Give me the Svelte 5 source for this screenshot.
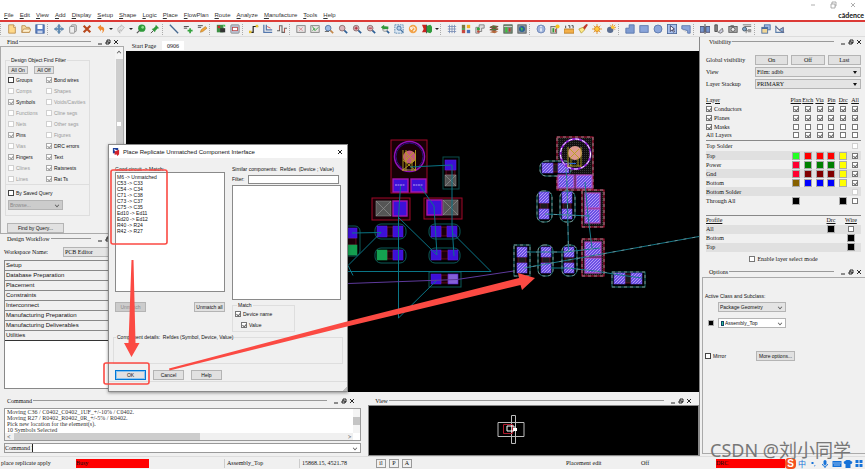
<script>
  const menus = ['File', 'Edit', 'View', 'Add', 'Display', 'Setup', 'Shape', 'Logic', 'Place', 'FlowPlan', 'Route', 'Analyze', 'Manufacture', 'Tools', 'Help'];

  const lens = '<path d="M7 7l4 4" stroke="#2c5f96" stroke-width="2"/><circle cx="5" cy="5" r="3.4" fill="#d9b7bd" stroke="#866" />';
  const board = '<rect x="1" y="2" width="10" height="8" fill="#e9e4e4" stroke="#777"/>';
  const toolbar = [
    [
      ['New', '<path d="M2 1h6l2 3v7H2z" fill="#ffd98a" stroke="#b98a4a"/><path d="M8 1v3h2" fill="#fff" stroke="#b98a4a"/>'],
      ['Open', '<path d="M1 10V2h4l1 2h4v6z" fill="#f5d9a0" stroke="#b98a4a"/><path d="M1 10l2-4h9l-2 4z" fill="#fff0cf" stroke="#b98a4a"/>'],
      ['Save', '<rect x="1" y="1" width="10" height="10" fill="#5c80c4" stroke="#3b5c98"/><rect x="3" y="1" width="6" height="5" fill="#fff"/><rect x="3" y="8" width="6" height="3" fill="#c8d4ea"/>']
    ],
    [
      ['Move', '<path d="M6 0l2 3H7v2h2V4l3 2-3 2V7H7v2h1l-2 3-2-3h1V7H3v1L0 6l3-2v1h2V3H4z" fill="#5d8cb8" stroke="#41698f" stroke-width=".4"/>'],
      ['Copy', '<rect x="4" y="1" width="6" height="8" rx="1" fill="#ddd" stroke="#888"/><rect x="2" y="3" width="6" height="8" rx="1" fill="#eee" stroke="#888"/>'],
      ['Delete', '<path d="M2 2l8 8M10 2l-8 8" stroke="#b8481c" stroke-width="2.6"/>'],
      ['Undo', '<path d="M2 4l4-3v2c5 0 5 6 1 8 2-3 1-4-1-4v2z" fill="#ef8a32"/>'],
      ['caret', ''],
      ['Redo', '<path d="M10 4L6 1v2C1 3 1 9 5 11 3 8 4 7 6 7v2z" fill="#e4e4e4" stroke="#999" stroke-width=".6"/>'],
      ['caret', ''],
      ['Fix', '<circle cx="7" cy="5" r="4.4" fill="#2f9a3a"/><circle cx="8" cy="4" r="1.6" fill="#8ae08a"/><path d="M1 11l3-3" stroke="#555" stroke-width="1.4"/>'],
      ['Unfix', '<path d="M7 1l4 4-2 .5L6.500 8 6 10 2 6l2-.5L6.500 3z" fill="#2f9a3a"/><path d="M1 11l3-3" stroke="#333"/>']
    ],
    [
      ['Add line', '<path d="M1 1l10 10" stroke="#46688f" stroke-width="1.6"/>'],
      ['Add text', '<path d="M1 3h6M1 5h4" stroke="#555" stroke-width="1.2"/><path d="M8.500 5v6M5.500 8h6" stroke="#33a23c" stroke-width="2"/>'],
      ['Edit text', '<path d="M1 2h6M1 4h4" stroke="#555" stroke-width="1.2"/><path d="M4 10l1-3 5-4 2 2-5 4z" fill="#f1a63a" stroke="#a86a1b" stroke-width=".6"/>']
    ],
    [
      ['Place manually', '<rect x="1" y="1" width="8" height="9" fill="#3c8f43"/><rect x="5" y="5" width="6" height="5" fill="#333"/><path d="M2 2h3v3H2z" fill="#c7302b"/><path d="M8 1h3v3z" fill="#3ac04a"/>'],
      ['Place component', '<rect x="1" y="1" width="10" height="10" rx="1" fill="#bcc7da" stroke="#888"/><rect x="3" y="4" width="6" height="4" fill="#fff" stroke="#b44"/>']
    ],
    [
      ['Add connect', '<path d="M1 10h4V3h6" fill="none" stroke="#222" stroke-width="1.4"/><rect x="0" y="8" width="3" height="3" fill="#e8c12f"/><rect x="8" y="1" width="3" height="3" fill="#e8c12f"/>'],
      ['Slide', '<path d="M1 1v9h10M4 1v6h7" fill="none" stroke="#5578ad" stroke-width="1.5"/><path d="M5 3l4 2" stroke="#c44"/>'],
      ['Delay tune', '<path d="M0 8h3V2h3v8h3V5h3" fill="none" stroke="#666" stroke-width="1.3"/><path d="M3 2v5M9 10V5" stroke="#c45a4a"/>']
    ],
    [
      ['Unrats all', board + '<path d="M3 4l5 4M8 4L4 8" stroke="#d58a90"/>'],
      ['Rats all', board + '<path d="M3 3l3 5 4-4M3 8l3-3" stroke="#2f9a3a" fill="none"/>'],
      ['Zoom points', '<path d="M7 7l4 4" stroke="#c4884a" stroke-width="2"/><circle cx="5" cy="5" r="3.4" fill="#9dbbe2" stroke="#4c6f9c"/><path d="M1 9h5" stroke="#555"/>'],
      ['Zoom fit', lens],
      ['Zoom in', lens + '<path d="M5 3v4M3 5h4" stroke="#a12" />'],
      ['Zoom out', lens + '<path d="M3 5h4" stroke="#a12"/>'],
      ['Zoom previous', '<path d="M7 7l4 4" stroke="#2c5f96" stroke-width="2"/><circle cx="6" cy="6" r="3" fill="#ddd" stroke="#999"/><path d="M1 4l4-3v2h5v3H5v1z" fill="#2f9a3a"/>'],
      ['Zoom selection', '<rect x="1" y="1" width="10" height="10" fill="#dce8f4" stroke="#4b7ca8" stroke-dasharray="2 1"/><circle cx="6" cy="5" r="2.500" fill="#b7d0ea" stroke="#3c6c9c"/><path d="M8 7l3 3" stroke="#3c6c9c" stroke-width="1.500"/>'],
      ['Refresh', '<circle cx="6" cy="6" r="5" fill="#f2a34a"/><path d="M3.500 6a2.500 2.500 0 1 1 2.500 2.500M3 4l1 3 2-2" stroke="#fff" fill="none" stroke-width="1.200"/>'],
      ['Flip design', '<path d="M0 1h5v9H0l2-4z" fill="#c9241d"/><path d="M6 2l4-1 2 2v6l-2 2-4-1z" fill="#2f9a3a"/><path d="M5 1h1v10H5z" fill="#333"/>'],
      ['caret', '']
    ],
    [
      ['Grid toggle', '<path d="M1 3h10M1 6h10M1 9h10M3 1v10M6 1v10M9 1v10" stroke="#7b8fb6"/>'],
      ['Color', '<rect x="1" y="1" width="4" height="4" fill="#7a7a40"/><rect x="7" y="1" width="4" height="4" fill="#f0b21e"/><rect x="1" y="7" width="4" height="4" fill="#c8483c"/><rect x="7" y="7" width="4" height="4" fill="#4971b4"/><path d="M1 6h4" stroke="#3a9440" stroke-width="2"/>'],
      ['Layers', '<path d="M1 11V4h4V1h6v4H8v4H5v2z" fill="#ddd" stroke="#777"/><circle cx="4" cy="6" r="2" fill="#38a043"/><circle cx="4" cy="9" r="1.500" fill="#c8483c"/>'],
      ['Cross section', '<path d="M1 4l4-2 6 1-4 2zM1 7l4-2 6 1-4 2z" fill="#3c8f43" stroke="#7c3e2c"/><path d="M1 10l4-2 6 1-4 2z" fill="#b5673a"/>'],
      ['Constraints', '<rect x="1" y="1" width="10" height="10" fill="#7a8c7a" stroke="#4c5e4c"/><path d="M1 3h10" stroke="#ddd"/><rect x="3" y="4" width="2" height="6" fill="#3c3"/><rect x="7" y="5" width="2" height="4" fill="#c33"/>'],
      ['World view', '<rect x="1" y="1" width="10" height="10" fill="#8e9aa2" stroke="#555"/><circle cx="6" cy="6" r="3.600" fill="#2c5f96"/><path d="M4 4l3 1-1 4z" fill="#4c4"/>']
    ],
    [
      ['Show element', '<circle cx="6" cy="6" r="4.800" fill="#9eb3dc" stroke="#6a82b2"/><path d="M6 5v4M6 2.500v1.500" stroke="#fff" stroke-width="1.600"/>'],
      ['Properties', '<rect x="1" y="3" width="7" height="8" fill="#d8d8c8" stroke="#666"/><rect x="3" y="5" width="2" height="5" fill="#2f9a3a"/><rect x="6" y="6" width="1" height="4" fill="#c33"/><circle cx="9" cy="3" r="2.500" fill="#f3c221"/>'],
      ['Measure', '<rect x="0" y="6" width="12" height="5" fill="#f3b04a" stroke="#b77a23"/><path d="M2 2v3M5 2h2v3M9 2h2v3" stroke="#333" fill="none"/>'],
      ['Highlight', '<path d="M1 6l5-2 2 3-4 4z" fill="#ffe98a" stroke="#b8a23a"/><path d="M6 4l4-4 2 1-4 6z" fill="#c0392b"/>'],
      ['Sun', '<path d="M6 0v12M0 6h12M2 2l8 8M10 2l-8 8" stroke="#e28a1e"/><circle cx="6" cy="6" r="3" fill="#ffc93c" stroke="#d9841c"/>'],
      ['Shadow', '<path d="M8 0v8M4 4h8M5 1l6 6M11 1L5 7" stroke="#e28a1e"/><circle cx="5" cy="7" r="3.800" fill="#5c6f92"/><circle cx="8" cy="4" r="2" fill="#ffc93c"/>']
    ],
    [
      ['Shape add', '<path d="M1 11V5h4V1h6v10z" fill="#7f9cd2" stroke="#5672a8"/>'],
      ['Shape rectangle', '<rect x="1" y="2" width="10" height="8" fill="#8aa5da" stroke="#5672a8"/>'],
      ['Shape circle', '<circle cx="6" cy="6" r="4.800" fill="#8aa5da" stroke="#5672a8"/>'],
      ['Shape select', '<rect x=".5" y=".5" width="11" height="11" fill="#a9c2ee" stroke="#4a6698"/><path d="M4 2v7l2-2 2 3 1-1-2-3h2z" fill="#fff" stroke="#335"/>'],
      ['Shape void', '<path d="M1 2h10v9H8V8L1 6z" fill="#8aa5da" stroke="#5672a8"/><path d="M2 7l5 3" stroke="#ccc"/>']
    ],
    [
      ['Mirror', '<path d="M0 3h5v7H0zM7 3h5v7H7z" fill="#7695cc" stroke="#446"/><path d="M6 0v12" stroke="#333"/>'],
      ['Rotate', '<path d="M1 1h3v8H1z" fill="#888" stroke="#444"/><path d="M5 10l5-5 1 4-3 2z" fill="#ccd" stroke="#666"/>'],
      ['Snapshot', '<rect x="1" y="3" width="10" height="7" fill="#aaa" stroke="#555"/><circle cx="6" cy="6.500" r="2.400" fill="#eee" stroke="#555"/><path d="M3 2h4" stroke="#555"/>'],
      ['Database', '<path d="M1 1h10M3 3h8M5 5v6M5 8h6" stroke="#666" fill="none"/><circle cx="3" cy="6" r="2.400" fill="#7aa4c4" stroke="#456"/><path d="M7 6h4v4H7z" fill="#999"/>']
    ],
    [
      ['Windows', '<rect x="4" y="1" width="7" height="6" fill="#9fbce8" stroke="#466a9e"/><rect x="1" y="4" width="7" height="7" fill="#f2d797" stroke="#466a9e"/><path d="M1 5h7" stroke="#466a9e" stroke-width="2"/>'],
      ['Graph', '<path d="M1 2v8h10" stroke="#5d7faa" fill="none" stroke-width="1.400"/><path d="M1 3l4 4 5-3v6L6 8z" fill="#86b0d8" stroke="#557"/>']
    ]
  ];

  const filters = [
    ['Groups', 0, 1, 'Bond wires', 1, 0], ['Comps', 0, 0, 'Shapes', 0, 0], ['Symbols', 1, 0, 'Voids/Cavities', 0, 0],
    ['Functions', 0, 0, 'Cline segs', 0, 0], ['Nets', 0, 0, 'Other segs', 0, 0], ['Pins', 1, 0, 'Figures', 0, 0],
    ['Vias', 0, 0, 'DRC errors', 1, 0], ['Fingers', 1, 0, 'Text', 1, 0], ['Clines', 0, 0, 'Ratsnests', 1, 0], ['Lines', 0, 0, 'Rat Ts', 1, 0]
  ].flatMap(([a, ac, ae, b, bc]) => [
    { name: a, on: !!ac, dim: !ac && !ae, strong: !!ae },
    { name: b, on: !!bc, dim: !bc, strong: false }
  ]);

  const steps = ['Setup', 'Database Preparation', 'Placement', 'Constraints', 'Interconnect', 'Manufacturing Preparation', 'Manufacturing Deliverables', 'Utilities'];
  const pairs = ['M6 -> Unmatched', 'C53 -> C33', 'C54 -> C34', 'C71 -> C38', 'C73 -> C37', 'C75 -> C35', 'Ed10 -> Ed11', 'Ed20 -> Ed12', 'R40 -> R24', 'R42 -> R27'];

  const cols = ['Plan', 'Etch', 'Via', 'Pin', 'Drc', 'All'];
  const groups = [
    ['Conductors', true, [1, 1, 1, 1, 1, 1]],
    ['Planes', true, [1, 1, 1, 1, 1, 1]],
    ['Masks', true, [0, 0, 0, 0, 0, 0]],
    ['All Layers', false, [0, 1, 1, 1, 0, 0]]
  ];
  const layers = [
    ['Top Solder', [], 'dim'],
    ['Top', ['#2f2', '#f00', '#f00', '#f00', '#ff0'], 'on'],
    ['Power', ['#ff0030', '#008000', '#008000', '#008000', '#ff0'], 'on'],
    ['Gnd', ['#ff0030', '#800000', '#800000', '#800000', '#ff0'], 'on'],
    ['Bottom', ['#866000', '#00f', '#00f', '#00f', '#ff0'], 'on'],
    ['Bottom Solder', [], 'dim'],
    ['Through All', ['#000', '', '', '', '#000'], 'off']
  ];

  // x, y, w, h, corner radius, outline colour
  const outlines = [
    [391, 140, 36, 53, 0, '#a00828'], [443, 157, 16, 32, 0, '#0b4c4c'], [372, 198, 38, 22, 0, '#a00828'],
    [424, 198, 38, 21, 0, '#a00828'], [375, 224, 31, 15, 6, '#0b5a58'], [429, 224, 31, 15, 6, '#0b5a58'],
    [375, 248, 31, 15, 6, '#0b5a58'], [429, 248, 31, 15, 6, '#0b5a58'], [429, 272, 32, 15, 0, '#0b5a58'],
    [340, 226, 20, 30, 5, '#0b5a58']
  ];
  const pads = [
    [393, 179, 15, 13, 'm'], [411, 179, 15, 13, 'm'], [445, 160, 11, 10, 'p'], [445, 175, 11, 11, 'x'],
    [376, 201, 15, 15, 'x'], [393, 201, 14, 15, 'm'], [427, 200, 15, 15, 'm'], [443, 200, 15, 15, 'x'],
    [377, 226, 10, 11, 'p'], [393, 226, 10, 11, 'p'], [431, 226, 10, 11, 'p'], [447, 226, 10, 11, 'p'],
    [377, 250, 10, 10, 'g'], [393, 250, 10, 10, 'p'], [431, 250, 10, 10, 'p'], [448, 250, 10, 10, 'p'],
    [431, 274, 10, 10, 'p'], [448, 274, 10, 10, 'l'], [345, 228, 12, 10, 'p'], [345, 245, 12, 10, 'g']
  ];
  const bridges = [[446, 170, 9, 5], [387, 227, 6, 9], [441, 227, 6, 9], [387, 251, 6, 8], [441, 251, 7, 8], [441, 275, 7, 8], [346, 238, 10, 7]];
  const newOutlines = [
    [557, 137, 36, 53, 0, '#c0143c'], [540, 161, 31, 15, 6, '#16716c'], [537, 191, 15, 31, 6, '#16716c'],
    [560, 191, 15, 31, 6, '#16716c'], [582, 190, 22, 37, 0, '#c0143c'], [514, 245, 16, 31, 0, '#16716c'],
    [538, 245, 15, 31, 6, '#16716c'], [562, 245, 15, 31, 6, '#16716c'], [582, 239, 22, 37, 0, '#c0143c'],
    [612, 272, 33, 15, 0, '#16716c']
  ];
  const newPads = [
    [558, 175, 16, 13, 1], [576, 175, 16, 13, 1], [542, 163, 11, 10, 0], [558, 163, 11, 10, 0],
    [539, 192, 10, 11, 0], [539, 209, 10, 10, 0], [562, 192, 10, 11, 0], [562, 209, 10, 10, 0],
    [585, 193, 15, 15, 1], [585, 209, 15, 14, 1], [517, 247, 10, 10, 0], [517, 263, 10, 10, 0],
    [541, 247, 10, 10, 0], [541, 263, 10, 10, 0], [564, 247, 10, 10, 0], [564, 263, 10, 10, 0],
    [585, 242, 16, 14, 1], [585, 258, 16, 15, 1], [614, 273, 11, 11, 0], [631, 273, 11, 11, 0]
  ];
  const newBridges = [[553, 164, 5, 8], [540, 203, 8, 6], [563, 203, 8, 6], [518, 257, 8, 6], [542, 257, 8, 6], [565, 257, 8, 6], [625, 274, 6, 9]];
</script>

{#snippet dockHead(title)}
  <header class="dock-head">
    <span>{title}</span><i></i>
    <button aria-label="Minimize {title}"><svg viewBox="0 0 6 6"><path d="M1 5h4" /></svg></button>
    <button aria-label="Float {title}"><svg viewBox="0 0 6 6"><path d="M2 3V1h3v3H4M1 3h3v2H1z" /></svg></button>
    <button aria-label="Close {title}"><svg viewBox="0 0 6 6"><path d="M1 1l4 4M5 1L1 5" /></svg></button>
  </header>
{/snippet}

<div class="app">
  <div class="top">
    <div class="win-controls">
      <button aria-label="Minimize"><svg viewBox="0 0 8 8"><path d="M2 4h4" /></svg></button>
      <button aria-label="Restore"><svg viewBox="0 0 8 8"><path d="M2 3h4v4H2zM3 3V1h4v4H6" /></svg></button>
      <button aria-label="Close"><svg viewBox="0 0 8 8"><path d="M2 2l4 4M6 2L2 6" /></svg></button>
    </div>
    <nav class="menu">
      {#each menus as m}<button><u>{m[0]}</u>{m.slice(1)}</button>{/each}
      <b>cādence</b>
    </nav>
  </div>

  <div class="toolbar">
    {#each toolbar as group}
      <span class="sep"></span>
      {#each group as [name, art]}
        {#if name === 'caret'}
          <button class="caret" aria-label="More"></button>
        {:else}
          <button class="tool" aria-label={name}><svg viewBox="0 0 12 12">{@html art}</svg></button>
        {/if}
      {/each}
    {/each}
  </div>

  <div class="main">
    <div class="work">
      <div class="upper">
        <aside class="left">
          {@render dockHead('Find')}
          <div class="find">
            <div class="find-body">
              <fieldset>
                <legend>Design Object Find Filter</legend>
                <div class="all"><button class="btn">All On</button><button class="btn">All Off</button></div>
                <div class="filters">
                  {#each filters as f}
                    <label class:dim={f.dim} class:strong={f.strong}><input type="checkbox" checked={f.on} />{f.name}</label>
                  {/each}
                </div>
              </fieldset>
              <div class="query">
                <label class="strong"><input type="checkbox" />By Saved Query</label>
                <span class="sel off"><select aria-label="Saved query" disabled><option>Browse...</option></select></span>
              </div>
              <button class="btn find-btn">Find by Query...</button>
            </div>
            <div class="vbar"><i></i></div>
          </div>
          {@render dockHead('Design Workflow')}
          <div class="space">
            <label for="ws">Workspace Name:</label>
            <span class="sel"><select id="ws"><option>PCB Editor</option></select></span>
          </div>
          <ul class="steps">
            {#each steps as s}<li>{s}</li>{/each}
          </ul>
        </aside>

        <section class="center">
          <div class="tabs"><button>Start Page</button><button class="active">0906</button></div>
          <div class="canvas">
            <svg width="100%" height="100%">
              <defs>
                <pattern id="hatch" width="3" height="3" patternUnits="userSpaceOnUse">
                  <rect width="3" height="3" fill="#6a50e4" /><path d="M0 0h1v1H0zM2 1h1v1H2zM1 2h1v1H1z" fill="#b498f6" />
                </pattern>
                <pattern id="mesh" width="2" height="2" patternUnits="userSpaceOnUse">
                  <rect width="2" height="2" fill="#101010" /><path d="M0 0h1v1H0z" fill="#343434" />
                </pattern>
              </defs>
              <g transform="translate(-126 -51)" fill="none">
                {#each outlines as [x, y, w, h, r, c]}<rect {x} {y} width={w} height={h} rx={r} stroke={c} fill={c === '#a00828' ? '#180006' : '#000'} />{/each}
                {#each bridges as [x, y, w, h]}<rect {x} {y} width={w} height={h} fill="#1c0008" stroke="#80102c" stroke-width=".7" />{/each}
                {#each pads as [x, y, w, h, k]}
                  <rect {x} {y} width={w} height={h} class="pad {k}" />
                  {#if k === 'x'}<path d="M{x} {y}l{w} {h}M{x + w} {y}l{-w} {h}" stroke="#999" stroke-width=".6" />{/if}
                {/each}
                <circle cx="409.500" cy="156.500" r="15" stroke="#9010b8" stroke-width="1.500" />
                <circle cx="409.500" cy="156.500" r="13.500" stroke="#3010a0" stroke-width=".8" />
                <circle cx="409.500" cy="157" r="6.500" fill="#c45c78" />
                <path d="M403 150v21M406 150v21M412 160v11M415.500 150v21M402 170h14M405 152l9 9M414 152l-9 9M403 160l12 10M415 160l-12 10" stroke="#b5a21a" stroke-width=".9" />
                <path d="M395 185h10M413 185h10" stroke="#b9a0f0" stroke-dasharray="2 .5" />
                <g stroke="#0a7586">
                  <path d="M410 167l42-2V225l2 31M400.500 186l-2 31V318M420 186l14 20 3 49M398 217l39 38M352 233l29-.5-33 33 5 10M348 271.500h143l-38-38M437 280l-38.500 38" />
                </g>
                <path d="M348 283.500l109-4 60-9" stroke="#5e3a9c" />

                {#each newOutlines as [x, y, w, h, r, c]}
                  <rect {x} {y} width={w} height={h} rx={r} fill={c === '#c0143c' ? 'url(#mesh)' : '#000'} stroke={c} />
                  <rect {x} {y} width={w} height={h} rx={r} stroke="#a0a0a0" stroke-dasharray="3 3" stroke-width=".8" />
                {/each}
                {#each newBridges as [x, y, w, h]}<rect {x} {y} width={w} height={h} fill="#1c1c1c" stroke="#80102c" stroke-width=".7" />{/each}
                {#each newPads as [x, y, w, h, m]}<rect {x} {y} width={w} height={h} fill="url(#hatch)" stroke={m ? '#b448bc' : '#5a40d8'} stroke-width={m ? 1.2 : 0.6} />{/each}
                <circle cx="575.500" cy="154" r="15" stroke="#8a1cd0" stroke-width="2" />
                <circle cx="575.500" cy="154" r="15" stroke="#fff" stroke-dasharray="4 3" />
                <circle cx="575" cy="153" r="7" fill="#dc9a8e" />
                <path d="M568 147v20M571 158v8M578 158v8M581 147v20M568 166h13M570 149l9 9M579 149l-9 9" stroke="#b5a21a" stroke-width=".9" />
                <path d="M570 163.500h6" stroke="#2a6ad0" />
                <g stroke="#177a8a">
                  <path d="M566 169l1 15 1.500 68M585 182l3 34 4 32M545 214l45 2M527 252h38l35-4M551 268h17l27 3 25 4 22 3M524 268l175-31.500" />
                  <path d="M566 169l1 15 1.500 68M545 214l45 2M527 252h38l35-4M568 268l52 6M524 268l175-31.500" stroke="#a8a8a8" stroke-dasharray="3 6" stroke-width=".6" />
                </g>
              </g>
            </svg>
          </div>
        </section>
      </div>

      <div class="lower">
        <section class="command">
          {@render dockHead('Command')}
          <div class="log">
            <div class="log-text">
              <p>Moving C36 / C0402_C0402_1UF_+/-10% / C0402.</p>
              <p>Moving R27 / R0402_R0402_0R_+/-5% / R0402.</p>
              <p>Pick new location for the element(s).</p>
              <p>10 Symbols Selected</p>
            </div>
            <div class="log-v"><i></i></div>
            <div class="log-h"><span>&lt;</span><i></i><span>&gt;</span></div>
          </div>
          <div class="prompt"><label for="cmd">Command &gt;</label><input id="cmd" type="text" /><span class="down"></span></div>
        </section>
        <section class="view">
          {@render dockHead('View')}
          <div class="world">
            <svg width="100%" height="100%" fill="none">
              <path d="M129 16.500h26v14h-26zM142.500 9.500h4v28h-4z" stroke="#bbb" />
              <path d="M134.500 18.500h9v9h-9z" stroke="#b0182c" /><path d="M138 20h7v5h-7z" stroke="#fff" /><path d="M144 22h4v3h-4z" fill="#fff" />
            </svg>
          </div>
        </section>
      </div>
    </div>

    <aside class="right">
      {@render dockHead('Visibility')}
      <div class="vis">
        <div class="global"><span>Global visibility</span><button class="btn">On</button><button class="btn">Off</button><button class="btn">Last</button></div>
        <div class="pick"><label for="vw">View</label><span class="sel solid"><select id="vw"><option>Film: adbb</option></select></span></div>
        <div class="pick"><label for="ls">Layer Stackup</label><span class="sel solid"><select id="ls"><option>PRIMARY</option></select></span></div>

        <table class="layers">
          <thead><tr><th>Layer</th>{#each cols as c}<th>{c}</th>{/each}</tr></thead>
          <tbody>
            {#each groups as [name, box, vals]}
              <tr>
                <td>{#if box}<label><input type="checkbox" checked />{name}</label>{:else}{name}{/if}</td>
                {#each vals as v, i}<td><input type="checkbox" checked={!!v} aria-label="{name} {cols[i]}" /></td>{/each}
              </tr>
            {/each}
          </tbody>
          <tbody class="colors">
            {#each layers as [name, sw, all]}
              <tr>
                <td>{name}</td>
                {#each [0, 1, 2, 3, 4] as i}<td>{#if sw[i]}<button class="sw" style:background={sw[i]} aria-label="{name} {cols[i]} color"></button>{/if}</td>{/each}
                <td><input type="checkbox" class={all} checked={all === 'on'} aria-label="{name} all" /></td>
              </tr>
            {/each}
          </tbody>
        </table>

        <table class="profile">
          <thead><tr><th>Profile</th><th>Drc</th><th>Wire</th></tr></thead>
          <tbody>
            <tr><td>All</td><td><button class="sw black" aria-label="All Drc"></button></td><td><input type="checkbox" aria-label="All wire" /></td></tr>
            <tr><td>Bottom</td><td></td><td><button class="sw black" aria-label="Bottom wire"></button></td></tr>
            <tr><td>Top</td><td></td><td><button class="sw black" aria-label="Top wire"></button></td></tr>
          </tbody>
        </table>
        <label class="enable"><input type="checkbox" />Enable layer select mode</label>
      </div>
      {@render dockHead('Options')}
      <div class="options">
        <label for="cls">Active Class and Subclass:</label>
        <div class="opt"><span class="sel"><select id="cls"><option>Package Geometry</option></select></span></div>
        <div class="opt sub"><button class="sw black" aria-label="Subclass color"></button><span class="sel white"><i></i><select aria-label="Subclass"><option>Assembly_Top</option></select></span></div>
        <div class="mirror"><label class="strong"><input type="checkbox" />Mirror</label><button class="btn">More options...</button></div>
      </div>
    </aside>
  </div>

  <footer class="status">
    <span class="s1">place replicate apply</span><span class="busy">Busy</span><span class="s2">Assembly_Top</span><span class="s3">15868.15, 4521.78</span>
    <button>il</button><button>P</button><button>A</button>
    <span class="s4">Placement edit</span><span class="s5">Off</span><span class="drc">DRC</span>
    <span class="tray">
      <b>S</b><em>中</em>
      <svg viewBox="0 0 54 9" fill="#1672d8"><path d="M2 3h2v2H2zM5 6h1l-1 2z" /><rect x="14" y="1" width="3" height="5" rx="1.500" /><path d="M13 5c0 3 5 3 5 0M15.500 7v2" stroke="#1672d8" fill="none" /><path d="M23 2h9v6h-9z" /><path d="M24 4h7M25 6h5" stroke="#fff" stroke-dasharray="1 1" /><path d="M34 3l3-2h3l3 2-1 2h-1v4h-5V5h-1zM46 1h3v3h-3zM50 1h3v3h-3zM46 5h3v3h-3zM50 5h3v3h-3z" /></svg>
    </span>
  </footer>

  <div class="dialog" role="dialog" aria-label="Place Replicate Unmatched Component Interface">
    <div class="dlg-title">
      <svg viewBox="0 0 9 9"><path d="M1 0h6v6H1z" fill="#1d3f98" /><path d="M2 1l5 2-3 2z" fill="#fff" /><path d="M3 4l5-2v5l-2 2-1-2-2 1z" fill="#d3232b" /></svg>
      <span>Place Replicate Unmatched Component Interface</span>
      <button aria-label="Close dialog"><svg viewBox="0 0 8 8"><path d="M2 2l4 4M6 2L2 6" stroke="#222" /></svg></button>
    </div>
    <div class="dlg-cols">
      <div class="dlg-a">
        <span>Good circuit -&gt; Match:</span>
        <ul class="box">{#each pairs as p}<li>{p}</li>{/each}</ul>
        <div class="pair"><button class="btn" disabled>Unmatch</button><button class="btn">Unmatch all</button></div>
      </div>
      <div class="dlg-b">
        <span>Similar components:&nbsp; Refdes&nbsp; (Device ; Value)</span>
        <div class="filter"><label for="flt">Filter:</label><input id="flt" type="text" /></div>
        <div class="box"></div>
        <fieldset>
          <legend>Match</legend>
          <label><input type="checkbox" checked />Device name</label>
          <label class="in"><input type="checkbox" checked />Value</label>
        </fieldset>
      </div>
    </div>
    <fieldset class="details"><legend>Component details:&nbsp; Refdes (Symbol, Device, Value)</legend></fieldset>
    <div class="actions"><button class="btn ok">OK</button><button class="btn">Cancel</button><button class="btn">Help</button></div>
    <div class="grip"></div>
  </div>

  <svg class="marks" fill="none">
    <rect x="111" y="170" width="56" height="74" rx="2" stroke="#fb4a43" stroke-width="1.600" />
    <rect x="104" y="363" width="45" height="21" rx="2" stroke="#fb4a43" stroke-width="1.600" />
    <path d="M131.500 260h2l2 83h4l-8 14-7.500-14h4.500z" fill="#fb4a43" />
    <path d="M169 368.500L345 322l174-44-1-5 17 5-13 12-1.500-5L345 327 169.500 370.500z" fill="#fb4a43" />
  </svg>
  <div class="watermark">CSDN @刘小同学</div>
</div>

<style>
  :global(body) { margin: 0; }
  .app {
    position: relative; height: 100vh; display: flex; flex-direction: column; overflow: hidden;
    background: #f0f0f0; color: #111; font: 5px/6px "Liberation Sans", "Noto Sans CJK SC", sans-serif;
  }
  .app * { box-sizing: border-box; }
  button, input, select { font: inherit; color: inherit; margin: 0; padding: 0; border: 0; background: none; border-radius: 0; }
  button { white-space: nowrap; }
  svg { display: block; }
  ul, p, fieldset { margin: 0; padding: 0; list-style: none; }
  fieldset { border: 1px solid #dedede; min-width: 0; }
  legend { padding: 0 1px; margin-left: 2px; }
  .btn { background: #e1e1e1; border: 1px solid #b4b4b4; height: 10px; text-align: center; }
  .btn:disabled { background: #ccc; color: #888; }
  label { display: flex; align-items: center; gap: 2px; white-space: nowrap; }
  .dim { color: #999; }

  input[type='checkbox'] { appearance: none; width: 6px; height: 6px; flex: none; background: #fff; border: 1px solid #777; position: relative; }
  input[type='checkbox']:checked::before {
    content: ''; position: absolute; left: 1px; top: 0; width: 2px; height: 3px;
    border: solid #666; border-width: 0 1px 1px 0; transform: rotate(40deg);
  }
  .filters input[type='checkbox'] { border-color: #aaa; }
  .filters input[type='checkbox']:checked::before { border-color: #999; }
  .dim input[type='checkbox'], input.dim { border-color: #d0d0d0 !important; }
  .strong input[type='checkbox'] { border-color: #444 !important; }

  .sel { position: relative; display: flex; align-items: center; height: 10px; border: 1px solid #b4b4b4; background: #e4e4e4; }
  .sel select { appearance: none; width: 100%; height: 8px; padding-left: 1px; opacity: 1; }
  .sel::after, .down::after {
    content: ''; position: absolute; right: 3px; top: 2px; width: 3px; height: 3px;
    border: solid #555; border-width: 0 1px 1px 0; transform: rotate(45deg) scale(.8);
  }
  .sel.solid::after { width: 0; height: 0; top: 3px; border: 2px solid transparent; border-top: 3px solid #111; border-bottom: 0; transform: none; }
  .sel.off { background: #ccc; color: #888; }
  .sel.white { background: #fff; }
  .sel i { width: 3px; height: 5px; margin-left: 2px; flex: none; background: #2bc79b; border: 1px solid #146; }

  .top { background: #fff; height: 22px; flex: none; border-bottom: 2px solid #dc3a36; }
  .win-controls { display: flex; justify-content: flex-end; gap: 12px; padding-right: 8px; height: 9px; }
  .win-controls svg { width: 8px; height: 8px; fill: none; stroke: #999; stroke-width: .8; }
  .menu { display: flex; align-items: center; gap: 6px; height: 12px; padding-left: 4px; font-size: 6px; }
  .menu button { color: #333; }
  .menu b { margin-left: auto; font: bold 7px/8px Lato, sans-serif; padding-right: 1px; }

  .toolbar { height: 15px; flex: none; display: flex; align-items: center; border-bottom: 1px solid #dcdcdc; }
  .sep { width: 5px; height: 11px; flex: none; border-left: 1px dotted #aaa; }
  .tool { width: 14px; height: 12px; flex: none; display: grid; place-items: center; }
  .tool svg { width: 10px; height: 10px; fill: none; }
  .caret { width: 6px; height: 6px; flex: none; display: grid; place-items: center; }
  .caret::after { content: ''; border: 2px solid transparent; border-top: 2px solid #222; border-bottom: 0; }

  .main { flex: 1; min-height: 0; display: flex; }
  .work { flex: 1; min-width: 0; display: flex; flex-direction: column; }
  .upper { flex: 1; min-height: 0; display: flex; }
  .left { width: 126px; flex: none; display: flex; flex-direction: column; padding-bottom: 3px; }
  .center { flex: 1; min-width: 0; display: flex; flex-direction: column; }

  .dock-head { display: flex; align-items: center; height: 9px; flex: none; padding: 0 6px 0 7px; font: 6px/8px "Liberation Serif", serif; }
  .dock-head i { flex: 1; height: 1px; background: #999; margin: 0 5px 0 1px; }
  .dock-head button { width: 8px; height: 8px; display: grid; place-items: center; }
  .dock-head svg { width: 6px; height: 6px; fill: none; stroke: #111; stroke-width: .9; }

  .find { display: flex; height: 188px; border: 1px solid #aaa; margin-right: 2px; }
  .find-body { flex: 1; padding: 10px 0 0 4px; }
  .find-body fieldset { width: 85px; height: 128px; padding: 3px 2px; }
  .all { display: flex; gap: 6px; }
  .all .btn { width: 20px; height: 8px; line-height: 5px; }
  .filters { display: grid; grid-template-columns: 38px 1fr; grid-auto-rows: 11px; }
  .query { width: 85px; height: 31px; border: 1px solid #dedede; border-top: 0; padding: 5px 2px 0; display: grid; gap: 4px; align-content: start; }
  .query .sel { width: 55px; }
  .find-btn { width: 57px; margin: 7px 0 0 2px; }
  .vbar { width: 8px; background: #f4f4f4; display: flex; flex-direction: column; align-items: center; }
  .vbar::before { content: ''; width: 3px; height: 3px; margin: 4px 0; border: solid #555; border-width: 1px 0 0 1px; transform: rotate(45deg) scale(.8); }
  .vbar i { width: 7px; height: 110px; background: #cdcdcd; display: grid; place-items: center; }
  .vbar i::after { content: ''; width: 4px; height: 4px; background: #fff; margin-top: 20px; }
  .space { display: flex; align-items: center; gap: 15px; padding: 4px 0 3px 4px; font: 6px/8px "Liberation Serif", serif; }
  .space .sel { flex: 1; }
  .steps { flex: 1; margin-left: 4px; border: 1px solid #888; background: #fff; font: 6px/9px "Liberation Sans", sans-serif; }
  .steps li { height: 10px; padding-left: 1px; background: #f0f0f0; border-bottom: 1px solid #888; }
  .steps li:last-child { border-color: #333; }

  .tabs { display: flex; align-items: end; height: 14px; flex: none; font: 6px/8px "Liberation Serif", serif; padding-bottom: 1px; }
  .tabs button { width: 36px; height: 9px; }
  .tabs .active { width: 22px; background: #fff; }
  .canvas { flex: 1; min-height: 0; background: #000; }
  .pad { fill: #3d10d8; stroke: #5818d8; stroke-width: .6; }
  .pad.m { stroke: #a814b0; stroke-width: 1.4; }
  .pad.x { fill: #555; stroke: #888; }
  .pad.g { fill: #14a050; stroke: #14a050; }
  .pad.l { fill: #8460d8; }

  .lower { height: 64px; flex: none; display: flex; padding-top: 4px; }
  .command { width: 52.4%; display: flex; flex-direction: column; padding-right: 4px; }
  .view { flex: 1; display: flex; flex-direction: column; margin-left: 2px; }
  .world { flex: 1; min-height: 0; background: #000; border: 1px solid #888; }
  .log { margin: 3px 1px 0 4px; height: 33px; border: 1px solid #999; background: #fff; display: grid; grid-template: 24px 7px / 1fr 7px; font: 6px/6px "Liberation Serif", serif; color: #333; }
  .log-text { overflow: hidden; display: flex; flex-direction: column; justify-content: end; padding-left: 2px; }
  .log-v { padding: 8px 0; background: #f4f4f4; }
  .log-v i { display: block; height: 8px; background: #c4c4c4; }
  .log-h { display: flex; align-items: center; gap: 4px; padding: 0 2px; background: #f0f0f0; justify-content: space-between; }
  .log-h i { width: 54%; height: 7px; background: #cdcdcd; margin-right: auto; }
  .prompt { position: relative; display: flex; align-items: center; margin: 2px 1px 0 4px; height: 10px; border: 1px solid #999; font: 6px/8px "Liberation Serif", serif; }
  .prompt label { width: 27px; }
  .prompt input { flex: 1; height: 8px; background: #fff; border-left: 1px solid #222; }

  .right { width: 166px; flex: none; display: flex; flex-direction: column; border-left: 1px solid #888; }
  .right .dock-head { padding: 0 2px 0 9px; }
  .vis { padding: 9px 4px 0 6px; font: 6px/8px "Liberation Serif", serif; height: 221px; }
  .global, .pick { display: flex; align-items: center; gap: 3px; height: 10px; margin-bottom: 2px; }
  .global span, .pick label { width: 46px; flex: none; white-space: nowrap; }
  .global .btn { flex: 1; line-height: 7px; }
  .pick .sel { flex: 1; }
  table { width: 100%; border-collapse: collapse; table-layout: fixed; }
  th, td { padding: 0; height: 9px; text-align: center; vertical-align: middle; font-weight: normal; line-height: 8px; }
  th { text-decoration: underline; }
  th:first-child, td:first-child { text-align: left; white-space: nowrap; }
  td input, td .sw { display: block !important; margin: 0 auto; }
  td label input { margin: 0; }
  .layers { margin-top: 6px; }
  .layers th:first-child { width: 84px; }
  .colors tr:first-child td { border-top: 1px solid #888; height: 11px; }
  .colors tr:nth-child(even) { background: #e0e0e0; }
  .sw { width: 8px; height: 8px; border: 1px solid #aaa; flex: none; }
  .black { background: #000; }
  .profile { margin-top: 10px; border-top: 1px solid #888; }
  .profile th:nth-child(2), .profile th:nth-child(3) { width: 20px; }
  .profile tbody tr:nth-child(odd) { background: #e0e0e0; }
  .enable { justify-content: center; margin-top: 3px; }
  .options { flex: 1; margin: 1px 0 2px 2px; border: 1px solid #aaa; border-right: 0; padding: 15px 4px 0 2px; }
  .opt { display: flex; align-items: center; gap: 4px; margin: 3px 0 6px 13px; }
  .opt .sel { width: 68px; }
  .sub { margin-left: 3px; }
  .sub .sw { width: 6px; height: 6px; }
  .options > label { height: 6px; }
  .mirror { display: flex; align-items: center; gap: 30px; margin-top: 23px; }
  .mirror .btn { width: 39px; }

  .status { height: 13px; flex: none; display: flex; align-items: center; border-top: 1px solid #ddd; font: 6px/9px "Liberation Serif", serif; white-space: nowrap; }
  .status span { height: 9px; }
  .s1 { width: 76px; padding-left: 1px; }
  .busy { width: 73px; background: #f00; margin-right: 75px; }
  .s2 { width: 75px; border-left: 1px solid #ccc; padding-left: 2px; }
  .s3 { width: 77px; border-left: 1px solid #ccc; padding-left: 2px; }
  .status button { width: 10px; height: 9px; border: 1px solid #999; margin-right: 3px; line-height: 6px; }
  .s4 { margin-left: auto; width: 75px; }
  .s5 { width: 75px; }
  .drc { width: 69px; background: #f00; }
  .tray { width: 80px; display: flex; align-items: center; gap: 2px; }
  .tray b { width: 11px; height: 11px; border-radius: 4px; background: #f4511e; color: #fff; font: bold 10px/11px "Liberation Sans", sans-serif; text-align: center; }
  .tray em { font: 8px/9px "Noto Sans CJK SC", sans-serif; color: #1672d8; }
  .tray svg { flex: 1; height: 9px; }

  .dialog { position: absolute; left: 108px; top: 144px; width: 240px; height: 248px; background: #f0f0f0; border: 1px solid #8a8a8a; box-shadow: 0 1px 3px #0006; display: flex; flex-direction: column; }
  .dlg-title { display: flex; align-items: center; gap: 3px; height: 13px; flex: none; background: #fff; padding: 0 3px; font: 6px/8px "Liberation Sans", sans-serif; }
  .dlg-title svg { width: 8px; height: 8px; }
  .dlg-title button { margin-left: auto; }
  .dlg-cols { display: flex; gap: 7px; padding: 8px 6px 0 6px; }
  .dlg-a { width: 110px; display: flex; flex-direction: column; }
  .dlg-b { flex: 1; display: flex; flex-direction: column; }
  .box { background: #fff; border: 1px solid #8a8a8a; }
  .dlg-a .box { height: 120px; padding: 1px; margin-bottom: 10px; }
  .pair { display: flex; justify-content: space-between; }
  .pair .btn { width: 31px; }
  .filter { display: flex; align-items: center; gap: 3px; height: 10px; margin: 2px 0 1px; }
  .filter input { flex: 1; height: 9px; background: #fff; border: 1px solid #8a8a8a; margin-right: 2px; }
  .dlg-b .box { height: 115px; margin-bottom: 2px; }
  .dlg-b fieldset { width: 63px; height: 30px; padding: 3px 2px; display: grid; align-content: start; gap: 5px; }
  .in { padding-left: 6px; }
  .details { margin: 2px 4px 0; height: 30px; flex: none; }
  .actions { display: flex; gap: 7px; padding: 6px 6px 0; }
  .actions .btn { width: 31px; }
  .actions .ok { border-color: #0078d7; outline: 1px solid #8cc4ee; outline-offset: -2px; }
  .grip { margin-top: auto; height: 10px; border-top: 1px solid #ddd; background: linear-gradient(135deg, #0000 50%, #bbb 50%) right bottom / 4px 4px no-repeat; }

  .marks { position: absolute; inset: 0; width: 100%; height: 100%; pointer-events: none; }
  .watermark { position: absolute; right: 14px; bottom: 9px; font: 18px/20px "Noto Sans", "Noto Sans CJK SC", sans-serif; color: #777; white-space: nowrap; pointer-events: none; }
</style>
